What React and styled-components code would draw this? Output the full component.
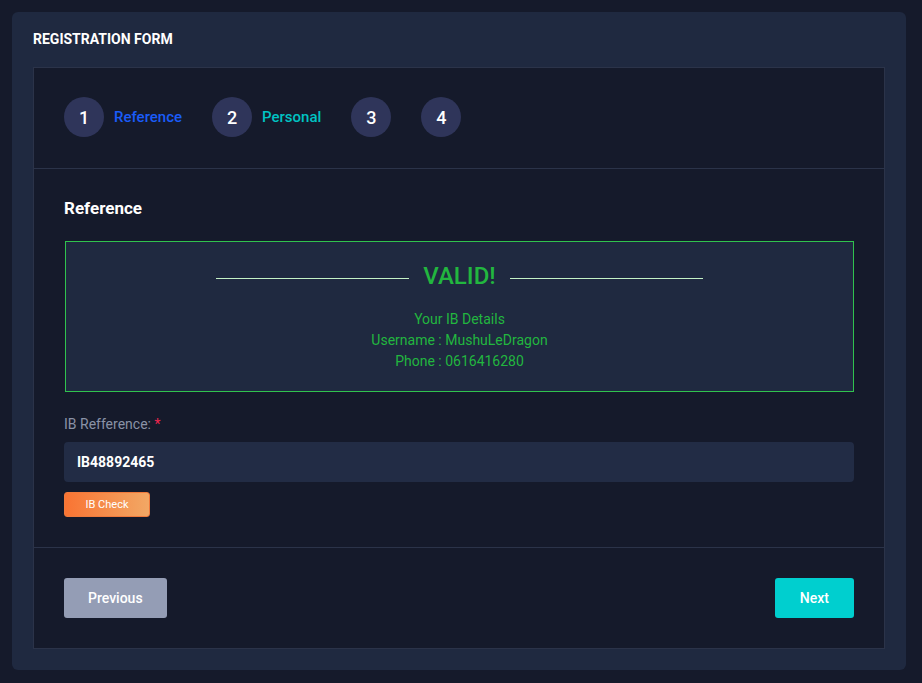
import styled, { createGlobalStyle } from "styled-components";

const GlobalStyle = createGlobalStyle`
  html, body {
    margin: 0;
    padding: 0;
    background-color: #151a2b;
    font-family: Roboto, "Liberation Sans", sans-serif;
  }
  * {
    box-sizing: border-box;
  }
`;

const Page = styled.div`
  padding: 12px 16px 14px 12px;
`;

const Card = styled.div`
  background-color: #1f2940;
  border-radius: 6px;
  padding: 19px 21px 21px 21px;
`;

const CardTitle = styled.h4`
  margin: 0 0 20px 0;
  font-size: 14px;
  line-height: 16px;
  font-weight: 700;
  color: #ffffff;
  text-transform: uppercase;
`;

const Wizard = styled.div`
  background-color: #151a2b;
  border: 1px solid #2b3349;
`;

const Section = styled.div`
  padding: ${(p) => p.$pad || "30px"};
  border-bottom: ${(p) => (p.$last ? "none" : "1px solid #2b3349")};
`;

const Steps = styled.div`
  display: flex;
  align-items: center;
`;

const Step = styled.div`
  display: flex;
  align-items: center;
  gap: 10px;
  margin-right: 30px;
`;

const Circle = styled.div`
  width: 40px;
  height: 40px;
  border-radius: 50%;
  background-color: #2f355a;
  color: #ffffff;
  display: flex;
  align-items: center;
  justify-content: center;
  font-size: 18px;
  font-weight: 500;
`;

const StepLabel = styled.span`
  font-size: 15px;
  font-weight: 500;
  color: ${(p) => p.$color};
`;

const Heading = styled.h5`
  margin: 0 0 23px 0;
  font-size: 17px;
  line-height: 20px;
  font-weight: 700;
  color: #ffffff;
`;

const ValidBox = styled.div`
  margin-left: 1px;
  border: 1px solid #30c34e;
  background-color: #1f2940;
  padding: 20px 0 19px 0;
  text-align: center;
`;

const ValidTitle = styled.div`
  display: flex;
  align-items: center;
  justify-content: center;
  gap: 14px;
  font-size: 24px;
  line-height: 28px;
  font-weight: 500;
  color: #22b63f;
  margin-bottom: 19px;

  &::before,
  &::after {
    content: "";
    display: block;
    width: 193px;
    height: 1px;
    margin-top: 4px;
    background-color: #c4f1c6;
  }
`;

const Detail = styled.div`
  font-size: 14px;
  line-height: 21px;
  color: #22b63f;
`;

const Field = styled.div`
  margin-top: 24px;
`;

const Label = styled.label`
  display: block;
  font-size: 14px;
  line-height: 17px;
  color: #8a92a6;
  margin-bottom: 9px;

  span {
    color: #f0264e;
  }
`;

const Input = styled.input`
  width: 100%;
  height: 40px;
  border: none;
  outline: none;
  border-radius: 4px;
  background-color: #222c45;
  color: #ffffff;
  font-family: Roboto, "Liberation Sans", sans-serif;
  font-size: 14px;
  font-weight: 700;
  padding: 0 13px;
`;

const CheckButton = styled.button`
  margin-top: 10px;
  width: 86px;
  height: 25px;
  border: 1px solid #f07a3c;
  border-radius: 3px;
  background: linear-gradient(90deg, #f97433 0%, #f2a865 100%);
  color: #ffffff;
  font-family: Roboto, "Liberation Sans", sans-serif;
  font-size: 11px;
  font-weight: 400;
  cursor: pointer;
`;

const Footer = styled.div`
  display: flex;
  justify-content: space-between;
  align-items: center;
`;

const NavButton = styled.button`
  height: 40px;
  padding: 0 ${(p) => p.$px || "25px"};
  border: none;
  border-radius: 3px;
  background-color: ${(p) => p.$bg};
  color: #ffffff;
  font-family: Roboto, "Liberation Sans", sans-serif;
  font-size: 14px;
  font-weight: 500;
  cursor: pointer;
`;

const steps = [
  { n: 1, label: "Reference", color: "#1a5cf8" },
  { n: 2, label: "Personal", color: "#00c3c3" },
  { n: 3 },
  { n: 4 },
];

export default function App() {
  return (
    <>
      <GlobalStyle />
      <Page>
        <Card>
          <CardTitle>Registration Form</CardTitle>
          <Wizard>
            <Section $pad="29px 30px 31px 30px">
              <Steps>
                {steps.map((s) => (
                  <Step key={s.n}>
                    <Circle>{s.n}</Circle>
                    {s.label && <StepLabel $color={s.color}>{s.label}</StepLabel>}
                  </Step>
                ))}
              </Steps>
            </Section>
            <Section $pad="29px 30px 30px 30px">
              <Heading>Reference</Heading>
              <ValidBox>
                <ValidTitle>VALID!</ValidTitle>
                <Detail>Your IB Details</Detail>
                <Detail>Username : MushuLeDragon</Detail>
                <Detail>Phone : 0616416280</Detail>
              </ValidBox>
              <Field>
                <Label>
                  IB Refference: <span>*</span>
                </Label>
                <Input defaultValue="IB48892465" />
                <CheckButton>IB Check</CheckButton>
              </Field>
            </Section>
            <Section $last $pad="30px 30px 30px 30px">
              <Footer>
                <NavButton $bg="#949db5" $px="24px">Previous</NavButton>
                <NavButton $bg="#00cfcf">Next</NavButton>
              </Footer>
            </Section>
          </Wizard>
        </Card>
      </Page>
    </>
  );
}
